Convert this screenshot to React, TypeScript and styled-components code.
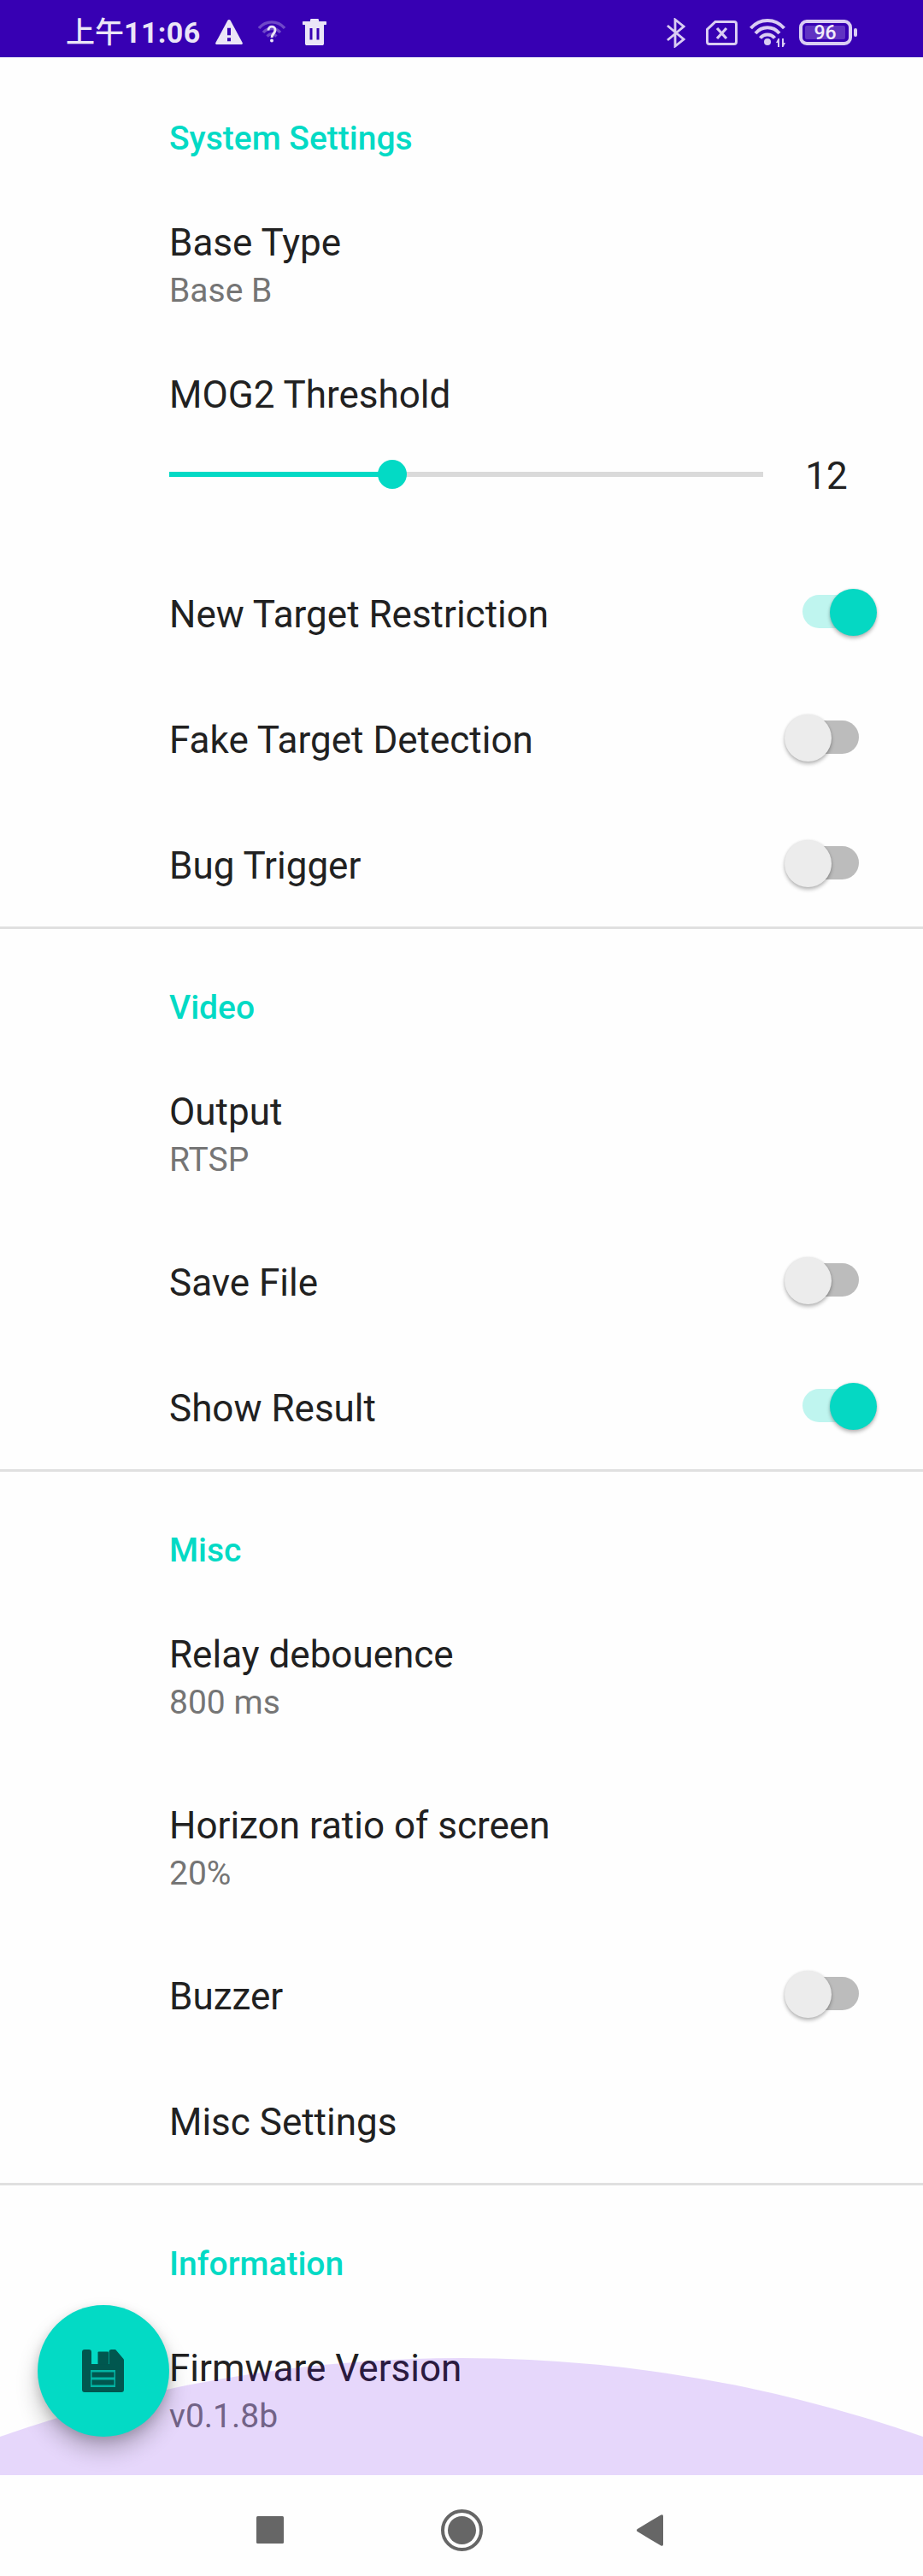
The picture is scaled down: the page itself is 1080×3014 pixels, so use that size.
import React from "react";
import styled, { createGlobalStyle } from "styled-components";

const teal = "#03dac5";

const GlobalStyle = createGlobalStyle`
  body {
    margin: 0;
    background: #fefefe;
    font-family: Roboto, "Noto Sans CJK TC", sans-serif;
  }
`;

const Screen = styled.div`
  width: 1080px;
  height: 3014px;
  display: flex;
  flex-direction: column;
  overflow: hidden;
  background: #fefefe;
`;

const StatusBar = styled.header`
  flex: none;
  height: 67px;
  box-sizing: border-box;
  padding: 0 77px;
  display: flex;
  justify-content: space-between;
  background: #3700b3;
  color: #ebe5f7;
`;

const StatusGroup = styled.div<{ $height: number }>`
  display: flex;
  align-items: center;
  height: ${(p) => p.$height}px;
`;

const Clock = styled.span`
  width: 158px;
  display: flex;
  align-items: baseline;
  font: 700 34px/56px Roboto, sans-serif;
  letter-spacing: 0.4px;
  white-space: nowrap;
`;

const DayPart = styled.span`
  font: 500 34px/56px "Noto Sans CJK TC", sans-serif;
  letter-spacing: 0;
`;

const Glyph = styled.svg<{ $gap?: number }>`
  display: block;
  flex: none;
  margin-left: ${(p) => p.$gap ?? 0}px;
`;

const Battery = styled.div`
  display: flex;
  align-items: center;
  margin-left: 15px;
`;

const BatteryShell = styled.div`
  box-sizing: border-box;
  width: 62px;
  height: 30px;
  padding: 3px;
  border: 4px solid #dacdf3;
  border-radius: 9px;
`;

const BatteryFill = styled.div`
  height: 16px;
  width: 47px;
  border-radius: 2px;
  background: #6033c2;
  color: #f1ecfa;
  font: 500 23px/18px Roboto, sans-serif;
  text-align: center;
`;

const BatteryTip = styled.div`
  width: 4px;
  height: 10px;
  margin-left: 2px;
  border-radius: 2px;
  background: #dacdf3;
`;

const Content = styled.main`
  position: relative;
  flex: none;
  height: 2829px;
  overflow: hidden;
`;

const Section = styled.section`
  border-top: 3px solid #e0e0e0;
  &:first-child {
    border-top-color: transparent;
  }
`;

const SectionTitle = styled.h2`
  margin: 0;
  height: 138px;
  box-sizing: border-box;
  padding: 69px 0 0 198px;
  color: ${teal};
  font-weight: 500;
  font-size: 39px;
  line-height: 46px;
`;

const Row = styled.div<{ $tall?: boolean }>`
  height: ${(p) => (p.$tall ? 200 : 147)}px;
  box-sizing: border-box;
  padding: 50px 53px 0 198px;
  display: flex;
  justify-content: space-between;
  align-items: flex-start;
`;

const Label = styled.div`
  color: #212121;
  font-size: 44px;
  line-height: 52px;
  white-space: nowrap;
`;

const Summary = styled.div`
  margin-top: 7px;
  color: #757575;
  font-size: 39px;
  line-height: 46px;
`;

const SliderRow = styled.div`
  height: 235px;
  box-sizing: border-box;
  padding: 28px 0 0 198px;
`;

const SliderLine = styled.div`
  display: flex;
  align-items: center;
  height: 52px;
  margin-top: 41px;
`;

const Track = styled.div`
  position: relative;
  width: 695px;
  height: 6px;
  background: #dadada;
`;

const Filled = styled.div`
  width: 261px;
  height: 6px;
  background: ${teal};
`;

const Thumb = styled.div`
  position: absolute;
  left: 244px;
  top: -14px;
  width: 34px;
  height: 34px;
  border-radius: 50%;
  background: ${teal};
`;

const SliderValue = styled(Label)`
  width: 74px;
  margin: 4px 0 0 37px;
  text-align: center;
`;

const SwitchTrack = styled.div<{ $on?: boolean }>`
  position: relative;
  width: 66px;
  height: 39px;
  margin: 3px 22px 0 0;
  border-radius: 20px;
  background: ${(p) => (p.$on ? "#bff5ef" : "#bcbcbc")};
  &::after {
    content: "";
    position: absolute;
    top: -7.5px;
    left: ${(p) => (p.$on ? 32 : -21.5)}px;
    width: 55px;
    height: 55px;
    border-radius: 50%;
    background: ${(p) => (p.$on ? "#05d8c3" : "#ececec")};
    box-shadow: 0 3px 4px rgba(0, 0, 0, 0.26), 0 0 3px rgba(0, 0, 0, 0.1);
  }
`;

const Arc = styled.div`
  position: absolute;
  left: -1091px;
  top: 2692px;
  width: 3262px;
  height: 3262px;
  border-radius: 50%;
  background: rgba(98, 0, 238, 0.153);
`;

const Fab = styled.button`
  position: absolute;
  left: 44px;
  top: 2630px;
  width: 154px;
  height: 154px;
  padding: 0;
  border: 0;
  border-radius: 50%;
  display: grid;
  place-items: center;
  background: ${teal};
  box-shadow: 0 16px 26px rgba(0, 0, 0, 0.23), 0 4px 12px rgba(0, 0, 0, 0.14);
`;

const NavBar = styled.nav`
  height: 118px;
  display: flex;
  align-items: center;
  padding: 10px 0 0 300px;
  box-sizing: border-box;
`;

const Item = ({ label, summary, on }: { label: string; summary?: string; on?: boolean }) => (
  <Row $tall={!!summary}>
    <div>
      <Label>{label}</Label>
      {summary && <Summary>{summary}</Summary>}
    </div>
    {on !== undefined && <SwitchTrack $on={on} />}
  </Row>
);

export default function App() {
  return (
    <Screen>
      <GlobalStyle />
      <StatusBar>
        <StatusGroup $height={74}>
          <Clock>
            <DayPart>上午</DayPart>11:06
          </Clock>
          <Glyph $gap={17} width="32" height="29" viewBox="0 0 32 30" preserveAspectRatio="none" fill="#ebe5f7">
            <path fillRule="evenodd" d="M16 0c.8 0 1.300.4 1.700 1.100L31.700 28c.5 1 .1 2-1.100 2H1.400C.2 30-.2 29 .3 28L14.300 1.100C14.700.4 15.200 0 16 0zM14 10v9h4v-9zM14 22v4h4v-4z" />
          </Glyph>
          <Glyph $gap={18} width="32" height="26" viewBox="0 0 32 26" fill="none">
            <g stroke="#6f48c8" strokeWidth="3.400">
              <path d="M1 9C9-.5 23-.5 31 9" />
              <path d="M6 14C11 8 21 8 26 14" />
              <path d="M10.500 18.500C14 15 18 15 21.500 18.500" />
            </g>
            <path d="M12 11.500c0-6 8-5.500 8-.5 0 4-4 4.500-4 9" stroke="#ebe5f7" strokeWidth="2.900" />
            <circle cx="16" cy="23.500" r="2" fill="#ebe5f7" />
          </Glyph>
          <Glyph $gap={20} width="28" height="31" viewBox="0 0 28 31" fill="#ebe5f7">
            <path fillRule="evenodd" d="M9 3V1.500C9 .5 9.500 0 10.500 0h7c1 0 1.500.5 1.500 1.500V3h8c.7 0 1 .4 1 1v2c0 .6-.3 1-1 1h-2v22c0 1.400-.8 2-2 2H5c-1.200 0-2-.6-2-2V7H1c-.7 0-1-.4-1-1V4c0-.6.3-1 1-1zM8.500 11v13.500h3V11zM16.500 11v13.500h3V11z" />
          </Glyph>
        </StatusGroup>
        <StatusGroup $height={76}>
          <Glyph width="22" height="35" viewBox="0 0 22 35" fill="none" stroke="#dacdf3" strokeWidth="2.800">
            <path d="M1 9l19 16-10 8V2l10 8L1 26" />
          </Glyph>
          <Glyph $gap={24} width="37" height="29" viewBox="0 0 37 29" fill="none" stroke="#dacdf3" strokeWidth="3">
            <path d="M11 1.500h22q2.500 0 2.500 2.500v21q0 2.500-2.500 2.500H4q-2.500 0-2.500-2.500V10.500z" />
            <path d="M13 9l11 12M24 9L13 21" strokeWidth="3.200" />
          </Glyph>
          <Glyph $gap={14} width="43" height="33" viewBox="0 0 43 33" fill="none">
            <g stroke="#dacdf3" strokeWidth="4">
              <path d="M1.500 11C12-1 30-1 40.500 11" />
              <path d="M7 17C14.500 8 27.500 8 35 17" />
              <path d="M12.500 22.500C17 17 25 17 29.500 22.500" />
            </g>
            <circle cx="21" cy="27" r="4" fill="#dacdf3" />
            <path d="M35 33V23h-1.500L31 28h2v5zM38 23v10h1.500L42 28h-2v-5z" fill="#dacdf3" />
          </Glyph>
          <Battery>
            <BatteryShell>
              <BatteryFill>96</BatteryFill>
            </BatteryShell>
            <BatteryTip />
          </Battery>
        </StatusGroup>
      </StatusBar>

      <Content>
        <Section>
          <SectionTitle>System Settings</SectionTitle>
          <Item label="Base Type" summary="Base B" />
          <SliderRow>
            <Label>MOG2 Threshold</Label>
            <SliderLine>
              <Track>
                <Filled />
                <Thumb />
              </Track>
              <SliderValue>12</SliderValue>
            </SliderLine>
          </SliderRow>
          <Item label="New Target Restriction" on />
          <Item label="Fake Target Detection" on={false} />
          <Item label="Bug Trigger" on={false} />
        </Section>
        <Section>
          <SectionTitle>Video</SectionTitle>
          <Item label="Output" summary="RTSP" />
          <Item label="Save File" on={false} />
          <Item label="Show Result" on />
        </Section>
        <Section>
          <SectionTitle>Misc</SectionTitle>
          <Item label="Relay debouence" summary="800 ms" />
          <Item label="Horizon ratio of screen" summary="20%" />
          <Item label="Buzzer" on={false} />
          <Item label="Misc Settings" />
        </Section>
        <Section>
          <SectionTitle>Information</SectionTitle>
          <Item label="Firmware Version" summary="v0.1.8b" />
        </Section>
        <Arc />
        <Fab aria-label="Save">
          <svg width="50" height="50" viewBox="0 0 50 50">
            <path fill="#01574f" d="M3 0h5c2 0 3 1 3 3v14h20.500V3c0-2 1-3 3-3H38c1 0 1.500.3 2 1l8.500 10c.4.500.5 1 .5 2v34c0 2-1 3-3 3H3c-2 0-3-1-3-3V3c0-2 1-3 3-3z" />
            <rect x="18.500" y="2.500" width="12.500" height="15" rx="1" fill="#01574f" />
            <path fill="#02b5a4" d="M10 24h29v20H10z" />
            <path fill="#01574f" d="M11.500 26.500h26v6h-26zM11.500 35.500h26v6h-26z" />
          </svg>
        </Fab>
      </Content>

      <NavBar>
        <Glyph width="32" height="32" viewBox="0 0 32 32">
          <rect width="32" height="32" rx="1.500" fill="#666" />
        </Glyph>
        <Glyph $gap={184} width="49" height="49" viewBox="0 0 49 49">
          <circle cx="24.500" cy="24.500" r="22.500" fill="none" stroke="#666" strokeWidth="4" />
          <circle cx="24.500" cy="24.500" r="16.500" fill="#666" />
        </Glyph>
        <Glyph $gap={180} width="31" height="37" viewBox="0 0 31 37">
          <path d="M.5 17.200L28 .7q3-1.500 3 1.300v33q0 2.800-3 1.300L.5 19.800q-1-1.300 0-2.600z" fill="#666" />
        </Glyph>
      </NavBar>
    </Screen>
  );
}
